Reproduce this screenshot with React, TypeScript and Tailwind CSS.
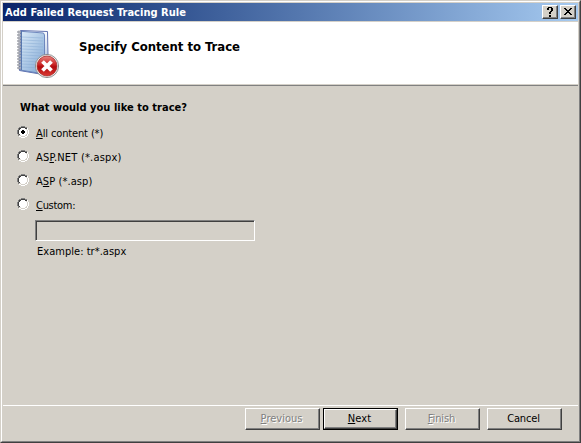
import type { ReactNode } from "react";

const raised =
  "border border-t-white border-l-white border-r-[#404040] border-b-[#404040] shadow-[inset_-1px_-1px_0_#808080] bg-[#d4d0c8]";

function NotebookIcon() {
  return (
    <svg width="44" height="50" viewBox="0 0 44 50" className="block">
      <defs>
        <linearGradient id="cover" x1="0" y1="0" x2="1" y2="1">
          <stop offset="0" stopColor="#dcebf8" />
          <stop offset="0.45" stopColor="#b3cde8" />
          <stop offset="1" stopColor="#7ba3d3" />
        </linearGradient>
        <linearGradient id="edge" x1="0" y1="0" x2="0" y2="1">
          <stop offset="0" stopColor="#ffffff" />
          <stop offset="1" stopColor="#8ea9d6" />
        </linearGradient>
        <linearGradient id="red" x1="0" y1="0" x2="0" y2="1">
          <stop offset="0" stopColor="#e88580" />
          <stop offset="0.4" stopColor="#cf2a2a" />
          <stop offset="0.55" stopColor="#b00a0e" />
          <stop offset="1" stopColor="#dc3a34" />
        </linearGradient>
      </defs>
      <path d="M4.500 1.500 L31.500 2.500 L32.300 41 L27 45.500 L3.500 41.500 Z" fill="url(#edge)" stroke="#6273b0" />
      <path d="M5 2.300 L27.500 4 L28.500 6 V45 L4 41 Z" fill="url(#cover)" stroke="#637eb8" strokeWidth="0.900" />
      {[8, 11, 14, 17, 20, 23, 26, 29, 32, 35, 38].map((y) => (
        <path key={y} d={`M6 ${y} L27 ${y + 1}`} stroke="#88abd3" strokeWidth="0.800" opacity="0.600" />
      ))}
      <path d="M5.500 2 V41" stroke="#5878af" strokeWidth="1" />
      {[3, 6, 9, 12, 15, 18, 21, 24, 27, 30, 33, 36, 39].map((y) => (
        <path key={y} d={`M5 ${y + 0.8} H2 Q0.500 ${y} 2 ${y - 0.8} H4.500`} fill="#e4e6ea" stroke="#7d828d" strokeWidth="0.800" />
      ))}
      <circle cx="31" cy="37" r="11.600" fill="#f1f1f1" stroke="#858585" strokeWidth="0.900" />
      <circle cx="31" cy="37" r="10" fill="url(#red)" stroke="#a21a1a" strokeWidth="0.700" />
      <path d="M26.500 32.500 L35.500 41.500 M35.500 32.500 L26.500 41.500" stroke="#fff" strokeWidth="3.800" />
    </svg>
  );
}

function Radio({ checked = false, tracking, children }: { checked?: boolean; tracking: string; children: ReactNode }) {
  return (
    <div className="flex h-6 items-start">
      <svg width="12" height="12" viewBox="0 0 12 12" shapeRendering="crispEdges" className="mr-[7px] shrink-0">
        <path d="M4 1h4v1h2v2h1v4h-1v2H8v1H4v-1H2V8H1V4h1V2h2z" fill="#fff" />
        <path d="M4 0h4v1H4zM2 1h2v1H2zM8 1h2v1H8zM1 2h1v2H1zM0 4h1v4H0zM1 8h1v2H1z" fill="#808080" />
        <path d="M4 1h4v1H4zM2 2h2v1H2zM8 2h2v1H8zM2 3h1v1H2zM1 4h1v4H1zM2 8h1v1H2z" fill="#404040" />
        <path d="M10 2h1v2h-1zM11 4h1v4h-1zM10 8h1v2h-1zM8 10h2v1H8zM4 11h4v1H4zM2 10h2v1H2z" fill="#fff" />
        <path d="M9 3h1v1H9zM10 4h1v4h-1zM9 8h1v1H9zM8 9h2v1H8zM4 10h4v1H4zM2 9h2v1H2z" fill="#d4d0c8" />
        {checked && <path d="M5 4h2v1h1v2H7v1H5V7H4V5h1z" fill="#000" />}
      </svg>
      <span className={`mt-px whitespace-pre leading-[13px] ${tracking}`}>{children}</span>
    </div>
  );
}

function Key({ children }: { children: ReactNode }) {
  return <span className="underline decoration-1 underline-offset-1">{children}</span>;
}

export default function App() {
  return (
    <div className="flex h-[443px] w-[581px] flex-col overflow-hidden border border-t-[#d4d0c8] border-l-[#d4d0c8] border-r-[#404040] border-b-[#404040] bg-[#d4d0c8] font-['DejaVu_Sans_Condensed','DejaVu_Sans',sans-serif] text-[11px] [font-stretch:condensed] text-black">
      <div className="flex grow flex-col border border-t-white border-l-white border-r-[#808080] border-b-[#808080] p-px">
        <div className="flex h-[18px] shrink-0 items-center bg-gradient-to-r from-[#0a246a] to-[#a6caf0] pr-[2px] pl-[2px]">
          <span className="grow whitespace-pre pt-[2px] font-bold leading-[16px] tracking-[0.03px] text-white">Add Failed Request Tracing Rule</span>
          <div className={`mr-[2px] h-[14px] w-4 ${raised}`}>
            <svg width="14" height="12" shapeRendering="crispEdges" className="block">
              <path d="M5 1h4v1H5zM4 2h2v2H4zM8 2h2v3H8zM7 5h2v1H7zM6 6h2v2H6zM6 9h2v2H6z" fill="#000" />
            </svg>
          </div>
          <div className={`h-[14px] w-4 ${raised}`}>
            <svg width="14" height="12" shapeRendering="crispEdges" className="block">
              <path d="M3 2h2v1h1v1h2V3h1V2h2v1h-1v1H9v1H8v1h1v1h1v1h1v1H9V8H8V7H6v1H5v1H3V8h1V7h1V6h1V5H5V4H4V3H3z" fill="#000" />
            </svg>
          </div>
        </div>
        <header className="mt-px flex h-[64px] shrink-0 border-b border-b-[#808080] bg-white">
          <div className="flex w-full border-b border-b-[#d4d0c8] pt-[7px] pl-[13px]">
            <NotebookIcon />
            <h1 className="ml-[19px] whitespace-pre pt-[10px] text-[13px] font-bold leading-[15px] tracking-[-0.03px]">Specify Content to Trace</h1>
          </div>
        </header>
        <main className="flex grow flex-col pt-[15px] pl-[14px]">
          <h2 className="ml-[3px] h-[25px] whitespace-pre font-bold leading-[14px] tracking-[0.03px]">What would you like to trace?</h2>
          <Radio checked tracking="tracking-[-0.13px]"><Key>A</Key>ll content (*)</Radio>
          <Radio tracking="tracking-[0.2px]">AS<Key>P</Key>.NET (*.aspx)</Radio>
          <Radio tracking="tracking-[0.08px]">A<Key>S</Key>P (*.asp)</Radio>
          <Radio tracking="tracking-[-0.3px]"><Key>C</Key>ustom:</Radio>
          <input
            disabled
            aria-label="Custom content"
            className="-mt-[2px] ml-[18px] h-[21px] w-[220px] border border-t-[#808080] border-l-[#808080] border-r-white border-b-white bg-[#d4d0c8] shadow-[inset_1px_1px_0_#404040]"
          />
          <p className="mt-[4px] ml-[20px] whitespace-pre leading-[13px] tracking-[0.03px]">Example: tr*.aspx</p>
        </main>
        <footer className="flex h-[35px] shrink-0 border-t border-t-white pt-[2px] pl-[242px]">
          <button disabled className={`mr-[3px] h-[22px] w-[75px] pt-px pr-[2px] text-[#808080] [text-shadow:1px_1px_0_#fff] ${raised}`}><Key>P</Key>revious</button>
          <div className="mr-[7px] h-[22px] w-[75px] border border-black">
            <button className={`block h-full w-full pt-px pr-[2px] tracking-[0.1px] ${raised}`}><Key>N</Key>ext</button>
          </div>
          <button disabled className={`mr-[7px] h-[22px] w-[75px] pt-px pr-[2px] tracking-[-0.1px] text-[#808080] [text-shadow:1px_1px_0_#fff] ${raised}`}><Key>F</Key>inish</button>
          <button className={`h-[22px] w-[75px] pt-px pr-[2px] tracking-[-0.15px] ${raised}`}>Cancel</button>
        </footer>
      </div>
    </div>
  );
}
